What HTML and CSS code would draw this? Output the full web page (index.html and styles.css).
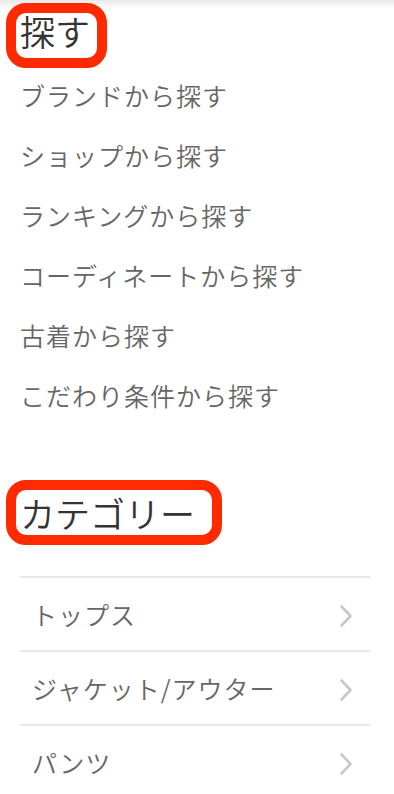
FILE: index.html
```html
<!DOCTYPE html>
<html lang="ja">
<head>
<meta charset="utf-8">
<meta name="viewport" content="width=device-width, initial-scale=1">
<title>探す</title>
<link rel="stylesheet" href="styles.css">
</head>
<body>
<section class="section">
  <h2 class="heading heading-search"><span class="heading-text">探す</span></h2>
  <ul class="search-list">
    <li class="search-item">ブランドから探す</li>
    <li class="search-item">ショップから探す</li>
    <li class="search-item">ランキングから探す</li>
    <li class="search-item">コーディネートから探す</li>
    <li class="search-item">古着から探す</li>
    <li class="search-item">こだわり条件から探す</li>
  </ul>
</section>
<section class="section">
  <h2 class="heading heading-category"><span class="heading-text">カテゴリー</span></h2>
  <ul class="cat-list">
    <li class="cat-item"><span class="cat-label">トップス</span><svg class="chevron" width="12" height="22" viewBox="0 0 12 22"><polyline points="1.5,1.5 10.5,11 1.5,20.5" fill="none" stroke="#c8c8c8" stroke-width="2.6" stroke-linecap="round" stroke-linejoin="round"/></svg></li>
    <li class="cat-item"><span class="cat-label">ジャケット/アウター</span><svg class="chevron" width="12" height="22" viewBox="0 0 12 22"><polyline points="1.5,1.5 10.5,11 1.5,20.5" fill="none" stroke="#c8c8c8" stroke-width="2.6" stroke-linecap="round" stroke-linejoin="round"/></svg></li>
    <li class="cat-item"><span class="cat-label">パンツ</span><svg class="chevron" width="12" height="22" viewBox="0 0 12 22"><polyline points="1.5,1.5 10.5,11 1.5,20.5" fill="none" stroke="#c8c8c8" stroke-width="2.6" stroke-linecap="round" stroke-linejoin="round"/></svg></li>
  </ul>
</section>
</body>
</html>
```
FILE: styles.css
```css
html, body {
  margin: 0;
  padding: 0;
}
body {
  background: #ffffff linear-gradient(#e9e9e9, #ffffff 9px) no-repeat;
  font-family: "Noto Sans CJK JP", "Noto Sans", sans-serif;
  font-weight: 350;
  color: #666666;
}
.section {
  padding: 0 20px;
}
.heading {
  margin: 0;
  font-size: 35px;
  line-height: 44px;
  font-weight: 350;
  color: #333333;
}
.heading-search {
  padding-top: 9px;
}
.heading-category {
  margin-top: 66px;
}
.heading-text {
  position: relative;
  display: inline-block;
}
.heading-text::after {
  content: "";
  position: absolute;
  border: 10px solid #ff2a00;
  border-radius: 20px;
}
.heading-search .heading-text::after {
  left: -14px;
  right: -17px;
  top: -6px;
  bottom: -15px;
}
.heading-category .heading-text::after {
  left: -14px;
  right: -27px;
  top: -11px;
  bottom: -10px;
}
.search-list {
  list-style: none;
  margin: 12px 0 0;
  padding: 0;
}
.search-item {
  font-size: 25px;
  letter-spacing: 1px;
  line-height: 60px;
  height: 60px;
}
.cat-list {
  list-style: none;
  margin: 41px 4px 0 0;
  padding: 0;
}
.cat-item {
  display: flex;
  align-items: center;
  justify-content: space-between;
  height: 72px;
  border-top: 2px solid #e8e8e8;
  padding: 0 18px 0 12px;
  font-size: 25px;
  letter-spacing: 1px;
}
.chevron {
  display: block;
  margin-top: 3px;
}
```
